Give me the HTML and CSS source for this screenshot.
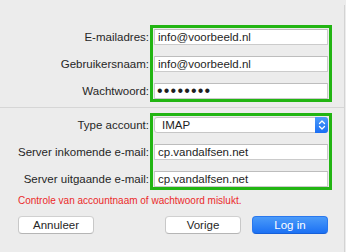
FILE: index.html
```html
<!DOCTYPE html>
<html lang="nl">
<head>
  <meta charset="UTF-8">
  <title>Account toevoegen</title>
  <link rel="stylesheet" href="styles.css">
</head>
<body>
  <div class="window">

    <!-- account gegevens -->
    <div class="section top">
      <div class="labels">
        <span>E-mailadres:</span>
        <span>Gebruikersnaam:</span>
        <span>Wachtwoord:</span>
      </div>
      <div class="fields">
        <div class="field">info@voorbeeld.nl</div>
        <div class="field">info@voorbeeld.nl</div>
        <div class="field password">&bull;&bull;&bull;&bull;&bull;&bull;&bull;&bull;</div>
      </div>
    </div>

    <div class="divider"></div>

    <!-- server gegevens -->
    <div class="section">
      <div class="labels">
        <span>Type account:</span>
        <span>Server inkomende e-mail:</span>
        <span>Server uitgaande e-mail:</span>
      </div>
      <div class="fields">
        <div class="field select">
          <span class="select-value">IMAP</span>
          <span class="stepper">
            <svg width="8" height="12" viewBox="0 0 8 12">
              <path d="M1.5 4.5 L4 2 L6.5 4.5 M1.5 7.5 L4 10 L6.5 7.5" fill="none" stroke="#fff" stroke-width="1.3" stroke-linecap="round" stroke-linejoin="round"/>
            </svg>
          </span>
        </div>
        <div class="field">cp.vandalfsen.net</div>
        <div class="field">cp.vandalfsen.net</div>
      </div>
    </div>

    <p class="error">Controle van accountnaam of wachtwoord mislukt.</p>

    <div class="buttons">
      <button class="btn">Annuleer</button>
      <div class="btn-group">
        <button class="btn">Vorige</button>
        <button class="btn primary">Log in</button>
      </div>
    </div>

  </div>
</body>
</html>
```

FILE: styles.css
```css
/* Basic reset */
html, body {
    margin: 0;
    padding: 0;
    background-color: #ececec;
    font-family: "Liberation Sans", Arial, sans-serif;
    color: #262626;
}

/* Dialog window */
.window {
    width: 345px;
    height: 250px;
    box-sizing: border-box;
    border-right: 1px solid #d3d3d3;
    border-bottom: 1px solid #d3d3d3;
    background-color: #ececec;
}

/* Label + field rows */
.section {
    display: flex;
    margin-top: 5px;
}

.section.top {
    padding-top: 20px;
}

.labels {
    width: 150px;
    box-sizing: border-box;
    padding: 4px 1px 0 0;
    display: flex;
    flex-direction: column;
    align-items: flex-end;
    gap: 11px;
    font-size: 11.5px;
}

.labels span {
    line-height: 16px;
    white-space: nowrap;
}

.fields {
    width: 182px;
    box-sizing: border-box;
    border: 3px solid #22b513;
    padding: 1px 1px 0 1px;
    display: flex;
    flex-direction: column;
    gap: 11px;
}

.field {
    height: 16px;
    box-sizing: border-box;
    background-color: #fff;
    border: 1px solid #cbcbcb;
    border-top-color: #bdbdbd;
    padding: 0 3px;
    font-size: 11.5px;
    line-height: 14px;
    color: #1e1e1e;
    white-space: nowrap;
}

.field.password {
    font-size: 16px;
    letter-spacing: 1.2px;
    line-height: 14px;
    padding-left: 2px;
}

/* Popup menu */
.field.select {
    display: flex;
    align-items: center;
    padding: 0 0 0 7px;
    border-radius: 3px;
    border-color: #c6c6c6;
}

.select-value {
    flex: 1;
}

.stepper {
    width: 13px;
    height: 16px;
    margin: -1px -1px -1px 0;
    border-radius: 0 3px 3px 0;
    background: linear-gradient(#4d9cf9, #1b6ff4);
    display: flex;
    align-items: center;
    justify-content: center;
}

.divider {
    height: 1px;
    margin-top: 5px;
    background-color: #d6d6d6;
}

/* Error message */
.error {
    margin: 5px 0 0 18px;
    font-size: 10px;
    line-height: 12px;
    color: #eb2a2a;
}

/* Buttons */
.buttons {
    display: flex;
    justify-content: space-between;
    padding: 9px 16px 0 18px;
}

.btn-group {
    display: flex;
    gap: 11px;
}

.btn {
    width: 76px;
    height: 18px;
    padding: 0;
    background-color: #fff;
    border: 1px solid #c8c8c8;
    border-top-color: #d0d0d0;
    border-bottom-color: #b5b5b5;
    border-radius: 4px;
    font-family: "Liberation Sans", Arial, sans-serif;
    font-size: 11.5px;
    color: #262626;
}

.btn.primary {
    background: linear-gradient(#4b9bf9, #1c71f4);
    border-color: #2a78ee;
    border-bottom-color: #1660d8;
    color: #fff;
}
```
